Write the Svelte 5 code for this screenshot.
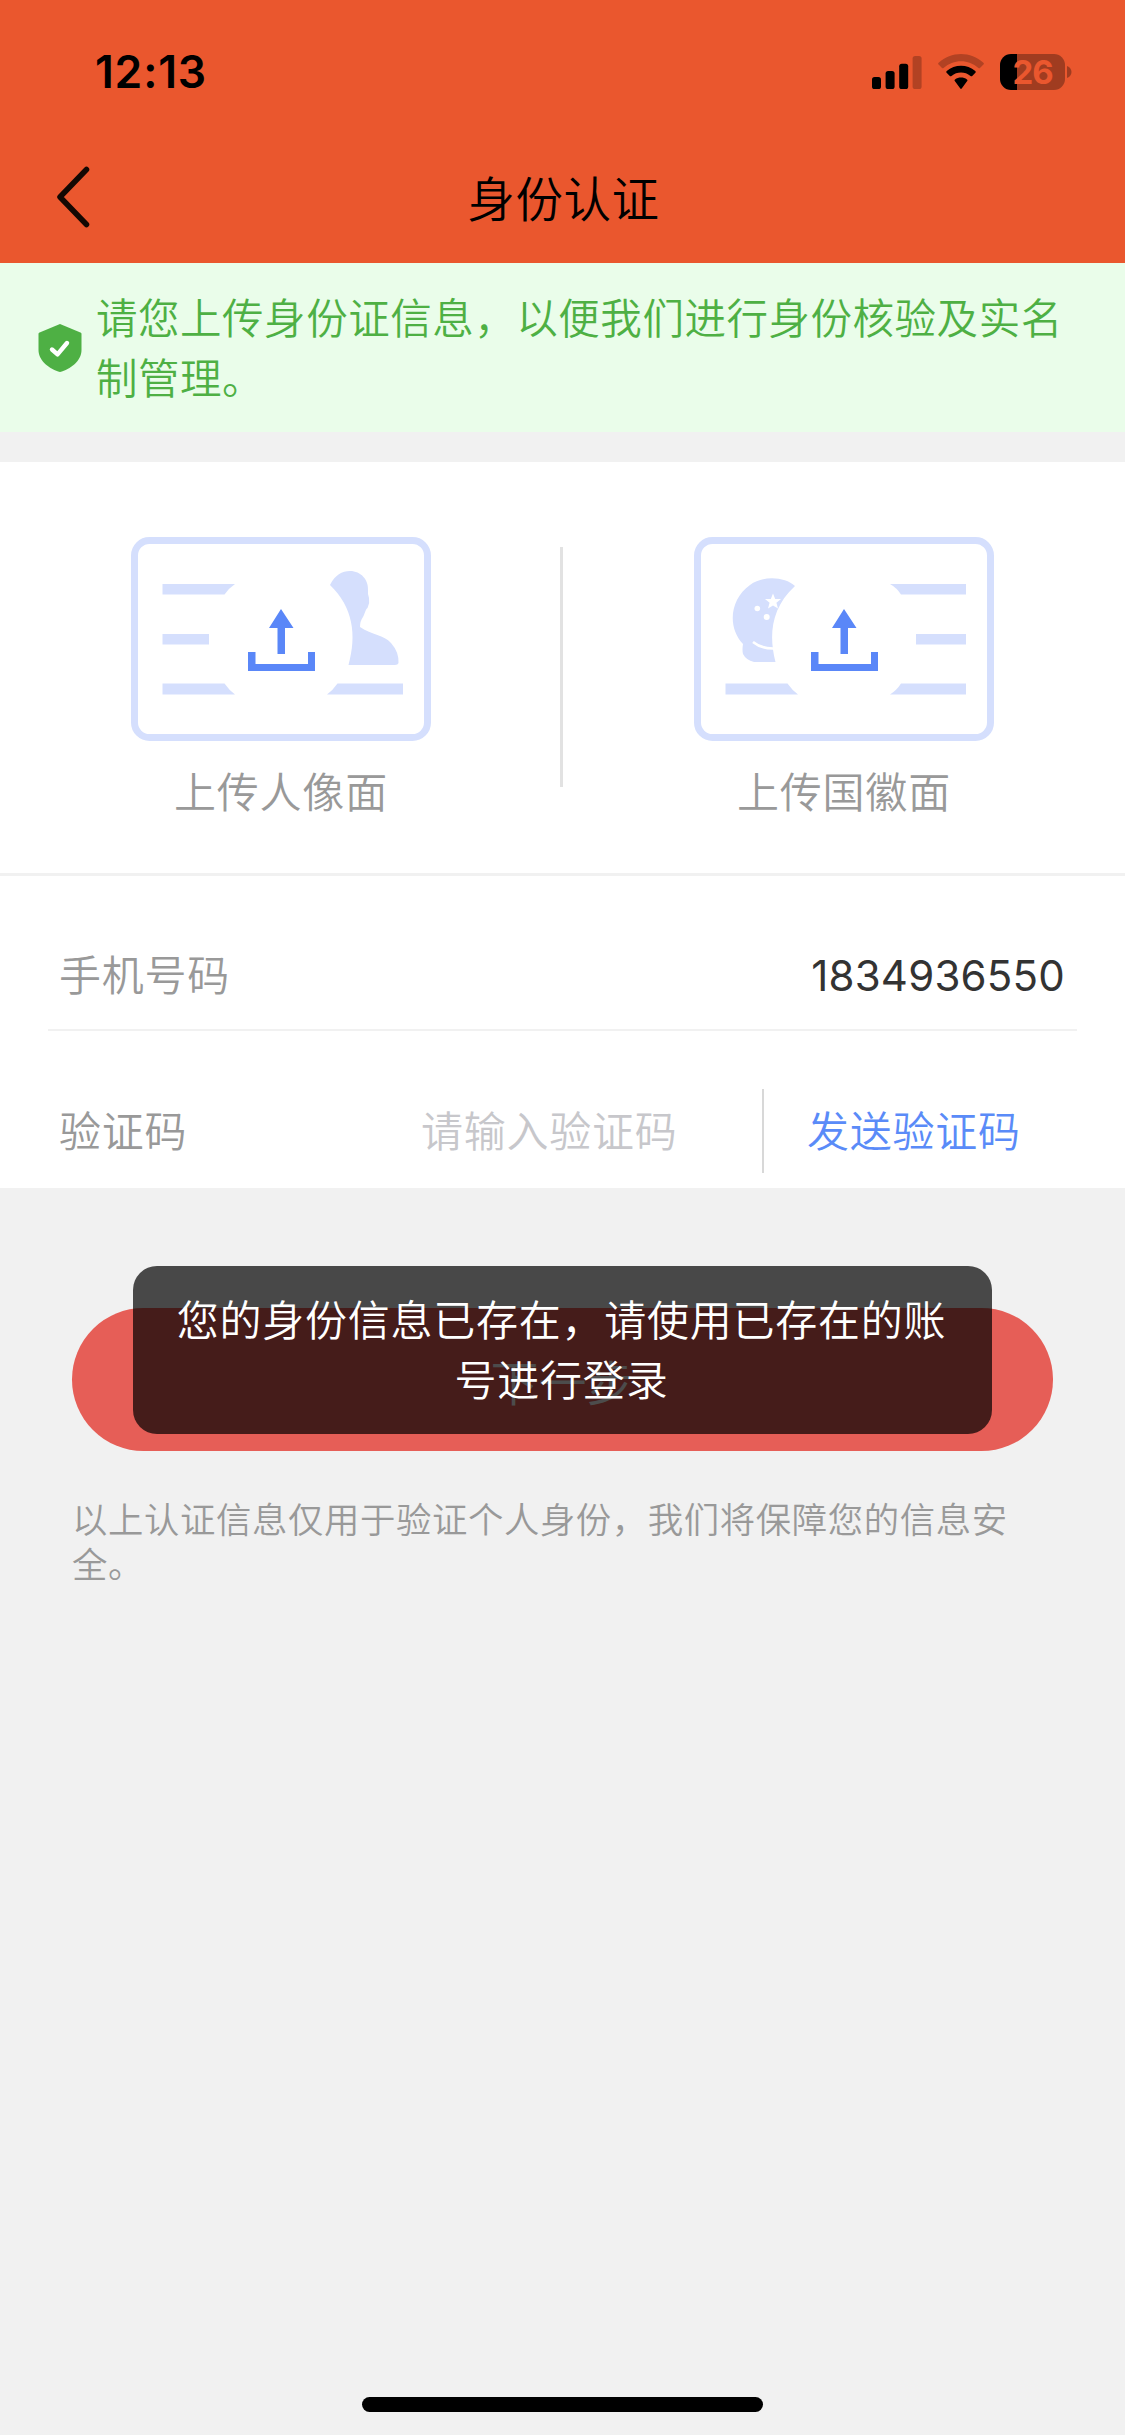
<script>
  const bars = [
    { x: 0, h: 12 },
    { x: 13.6, h: 18 },
    { x: 27.2, h: 25.3 },
    { x: 40.6, h: 33, dim: true }
  ];
</script>

<div class="screen">
  <header>
    <div class="status">
      <span class="time">12:13</span>
      <div class="indicators">
        <svg class="signal" viewBox="0 0 50 36">
          {#each bars as b}
            <rect x={b.x} y={35 - b.h} width="9" height={b.h} rx="2.6" opacity={b.dim ? 0.24 : 1} />
          {/each}
        </svg>
        <svg class="wifi" viewBox="0 0 46 36">
          <path opacity="0.24" d="M0.6 10.6 Q-0.4 9.6 0.6 8.7 C13 -2.9 33 -2.9 45.4 8.7 Q46.4 9.6 45.4 10.6 L42 14 Q41.3 14.7 40.4 13.9 C30.5 4.9 15.5 4.9 5.6 13.9 Q4.7 14.7 4 14 Z" />
          <path d="M8.6 18.8 Q7.7 17.9 8.7 17 C16.8 10 29.2 10 37.3 17 Q38.3 17.9 37.4 18.8 L34.2 22 Q33.5 22.7 32.5 21.9 C27 17.3 19 17.3 13.5 21.9 Q12.5 22.7 11.8 22 Z" />
          <path d="M16.8 27 Q16 26.2 17 25.5 C20.5 22.9 25.5 22.9 29 25.5 Q30 26.2 29.2 27 L23.7 34.6 Q23 35.3 22.3 34.6 Z" />
        </svg>
        <div class="battery">
          <div class="cell"><span>26</span></div>
          <svg class="nub" viewBox="0 0 5 12"><path d="M0 0 C6 2 6 10 0 12Z" /></svg>
        </div>
      </div>
    </div>
    <div class="nav">
      <svg class="back" viewBox="0 0 34 62"><path d="M30.5 3.5 L4 31 L30.5 58.5" /></svg>
      <h1>身份认证</h1>
    </div>
  </header>

  <section class="notice">
    <svg class="shield" viewBox="0 0 44 48">
      <path fill="#4eb044" d="M22 0 L43 8.7 Q43.5 9 43.5 10 V26 C43.5 37 32 45.5 22 48 C12 45.5 0.5 37 0.5 26 V10 Q0.5 9 1 8.7 Z" />
      <path fill="none" stroke="#fff" stroke-width="4.4" stroke-linecap="round" stroke-linejoin="round" d="M14 25.5 L19.5 30.3 L29 19" />
    </svg>
    <p>请您上传身份证信息，以便我们进行身份核验及实名制管理。</p>
  </section>

  <section class="uploads">
    <div class="upload front">
      <svg class="card" viewBox="0 0 300 204">
        <rect class="frame" x="3.5" y="3.5" width="293" height="197" rx="15" />
        <g class="tint">
          <path d="M31.5 47 H104 Q98 51 93.5 57.5 H31.5Z" />
          <path d="M31.5 97 H78 V107.5 H31.5Z" />
          <path d="M31.5 146.5 H93.5 Q98 153 104 157.5 H31.5Z" />
          <path d="M196 157.5 Q202 153 206.5 146.5 H272 V157.5Z" />
          <path d="M199 48 C204 38 211 34 219 34 C230 34 238 43 237 54 Q236.5 57 238 61 Q239 66 236.5 71 C234 73 234 77 232 80 Q229 84 229 90 C241 98 253 98 260 106 Q268 115 267.5 126 Q267 128 264 128 H217.5 C226 98 222 70 199 48Z" />
        </g>
        <g class="arrow">
          <path d="M150 72 L162.5 91 H154 V117 H146.5 V91 H138Z" />
          <path d="M117 115 H124.5 V127 H177 V115 H184 V134 H117Z" />
        </g>
      </svg>
      <span>上传人像面</span>
    </div>
    <div class="divider"></div>
    <div class="upload">
      <svg class="card" viewBox="0 0 300 204">
        <rect class="frame" x="3.5" y="3.5" width="293" height="197" rx="15" />
        <g class="tint">
          <path d="M101 49 C91 40 70 38 56 48 C36 62 33 90 49 107 Q48 113 49 117 Q52 123 60 125 H81.5 C75 100 76 72 101 49Z" />
          <path d="M31.5 146.5 H93.5 Q98 153 104 157.5 H31.5Z" />
          <path d="M196 47 H272 V57.5 H207 Q203 51 196 47Z" />
          <path d="M222 97 H272 V107.5 H222Z" />
          <path d="M196 157.5 Q203 153 207 146.5 H272 V157.5Z" />
        </g>
        <path fill="#fff" d="M79 56.5 L81.2 62 H87 L82.4 65.8 L84 71.6 L79 68.4 L74 71.6 L75.6 65.8 L71 62 H76.8Z" />
        <circle cx="63.3" cy="71.5" r="2.8" fill="#fff" />
        <circle cx="72.7" cy="80" r="3" fill="#fff" />
        <path fill="none" stroke="#fff" stroke-width="2.6" d="M59 105 Q67 111.5 79 111.5" />
        <g class="arrow">
          <path d="M150 72 L162.5 91 H154 V117 H146.5 V91 H138Z" />
          <path d="M117 115 H124.5 V127 H177 V115 H184 V134 H117Z" />
        </g>
      </svg>
      <span>上传国徽面</span>
    </div>
  </section>

  <section class="form">
    <div class="row phone">
      <span class="label">手机号码</span>
      <span class="value">1834936550</span>
    </div>
    <div class="row code">
      <span class="label">验证码</span>
      <span class="placeholder">请输入验证码</span>
      <span class="send">发送验证码</span>
    </div>
  </section>

  <div class="submit">
    <button>下一步</button>
    <div class="toast">您的身份信息已存在，请使用已存在的账号进行登录</div>
  </div>
  <p class="footnote">以上认证信息仅用于验证个人身份，我们将保障您的信息安全。</p>
  <div class="home"></div>
</div>

<style>
  :global(body) {
    margin: 0;
    background: #f1f1f1;
  }
  .screen {
    box-sizing: border-box;
    width: 1125px;
    height: 2435px;
    display: flex;
    flex-direction: column;
    background: #f1f1f1;
    font-family: Inter, "Noto Sans CJK SC", sans-serif;
    font-size: 42px;
    font-weight: 350;
    letter-spacing: 0.76px;
    color: #999;
    overflow: hidden;
  }
  header {
    height: 263px;
    flex: none;
    background: #ea572e;
    color: #000;
  }
  .status {
    height: 144px;
    padding: 0 53px 0 95px;
    display: flex;
    align-items: center;
    justify-content: space-between;
  }
  .time {
    font-size: 44.5px;
    font-weight: 600;
    letter-spacing: 0.8px;
  }
  .indicators {
    display: flex;
    align-items: center;
  }
  .signal {
    width: 50px;
    height: 36px;
    margin-right: 16px;
  }
  .wifi {
    width: 46px;
    height: 36px;
    margin-right: 16px;
  }
  .battery {
    display: flex;
    align-items: center;
    gap: 2px;
  }
  .cell {
    width: 65px;
    height: 36px;
    border-radius: 11px;
    background: linear-gradient(90deg, #000 17px, #a03c20 17px);
    display: flex;
    align-items: center;
    justify-content: center;
    color: #ea572e;
    font-size: 33px;
    font-weight: 700;
    letter-spacing: -1px;
  }
  .nub {
    width: 5px;
    height: 12px;
    fill: #a03c20;
  }
  .nav {
    height: 112px;
    display: grid;
    grid-template-columns: 200px 1fr 200px;
    align-items: center;
  }
  .back {
    width: 34px;
    height: 62px;
    margin: -6px 0 0 56px;
    fill: none;
    stroke: #140803;
    stroke-width: 5.5;
    stroke-linecap: round;
    stroke-linejoin: round;
  }
  h1 {
    margin: 0;
    padding-left: 2px;
    text-align: center;
    font-size: 47.5px;
    font-weight: 350;
    line-height: 60px;
    letter-spacing: 0.5px;
  }
  .notice {
    box-sizing: border-box;
    height: 169px;
    flex: none;
    padding: 2px 36px 0 38px;
    display: flex;
    align-items: center;
    background: #eafdea;
    color: #4eb044;
  }
  .shield {
    width: 44px;
    height: 48px;
    margin: 0 14px 2px 0;
    flex: none;
  }
  .notice p {
    margin: 0;
    font-size: 41.5px;
    line-height: 60px;
    letter-spacing: 0.53px;
  }
  .uploads {
    box-sizing: border-box;
    height: 414px;
    flex: none;
    margin-top: 30px;
    padding-top: 75px;
    display: grid;
    grid-template-columns: 560px 3px 562px;
    background: #fff;
    border-bottom: 3px solid #f1f1f1;
  }
  .upload {
    display: flex;
    flex-direction: column;
    align-items: center;
  }
  .front {
    padding-left: 2px;
  }
  .upload span {
    margin-top: 22px;
    line-height: 60px;
  }
  .divider {
    height: 240px;
    margin-top: 10px;
    background: #e2e2e2;
  }
  .card {
    width: 300px;
    height: 204px;
  }
  .frame {
    fill: none;
    stroke: #d5dffd;
    stroke-width: 7;
  }
  .tint {
    fill: #d5dffd;
  }
  .arrow {
    fill: #5a87f8;
  }
  .form {
    height: 312px;
    flex: none;
    background: #fff;
  }
  .row {
    box-sizing: border-box;
    margin: 0 48px;
    padding: 0 12px 0 11px;
    display: flex;
    align-items: center;
    line-height: 60px;
  }
  .phone {
    height: 155px;
    padding-top: 46px;
    justify-content: space-between;
    border-bottom: 2px solid #f1f1f1;
  }
  .value {
    color: #333;
    font-weight: 400;
    letter-spacing: 0.2px;
  }
  .code {
    height: 157px;
    padding-top: 44px;
  }
  .code .label {
    width: 362px;
  }
  .placeholder {
    width: 341px;
    color: #c7c7cb;
  }
  .send {
    height: 84px;
    margin-bottom: 1px;
    line-height: 85px;
    padding-left: 43px;
    border-left: 2px solid #d8d8d8;
    color: #5a8bf8;
  }
  .submit {
    position: relative;
    margin: 120px 72px 0;
  }
  button {
    display: block;
    width: 100%;
    height: 143px;
    padding: 0;
    border: 0;
    border-radius: 72px;
    background: #e65e57;
    color: #fff;
    font: inherit;
    font-size: 48px;
  }
  .toast {
    position: absolute;
    box-sizing: border-box;
    left: 61px;
    top: -42px;
    width: 859px;
    height: 168px;
    padding: 25px 43px 23px 41px;
    border-radius: 24px;
    background: rgba(0, 0, 0, 0.7);
    color: #fff;
    line-height: 60px;
    text-align: center;
  }
  .footnote {
    margin: 47px 72px 0;
    font-size: 35.4px;
    line-height: 45px;
    letter-spacing: 0.6px;
  }
  .home {
    width: 401px;
    height: 15px;
    margin: auto auto 23px;
    border-radius: 8px;
    background: #000;
  }
</style>
